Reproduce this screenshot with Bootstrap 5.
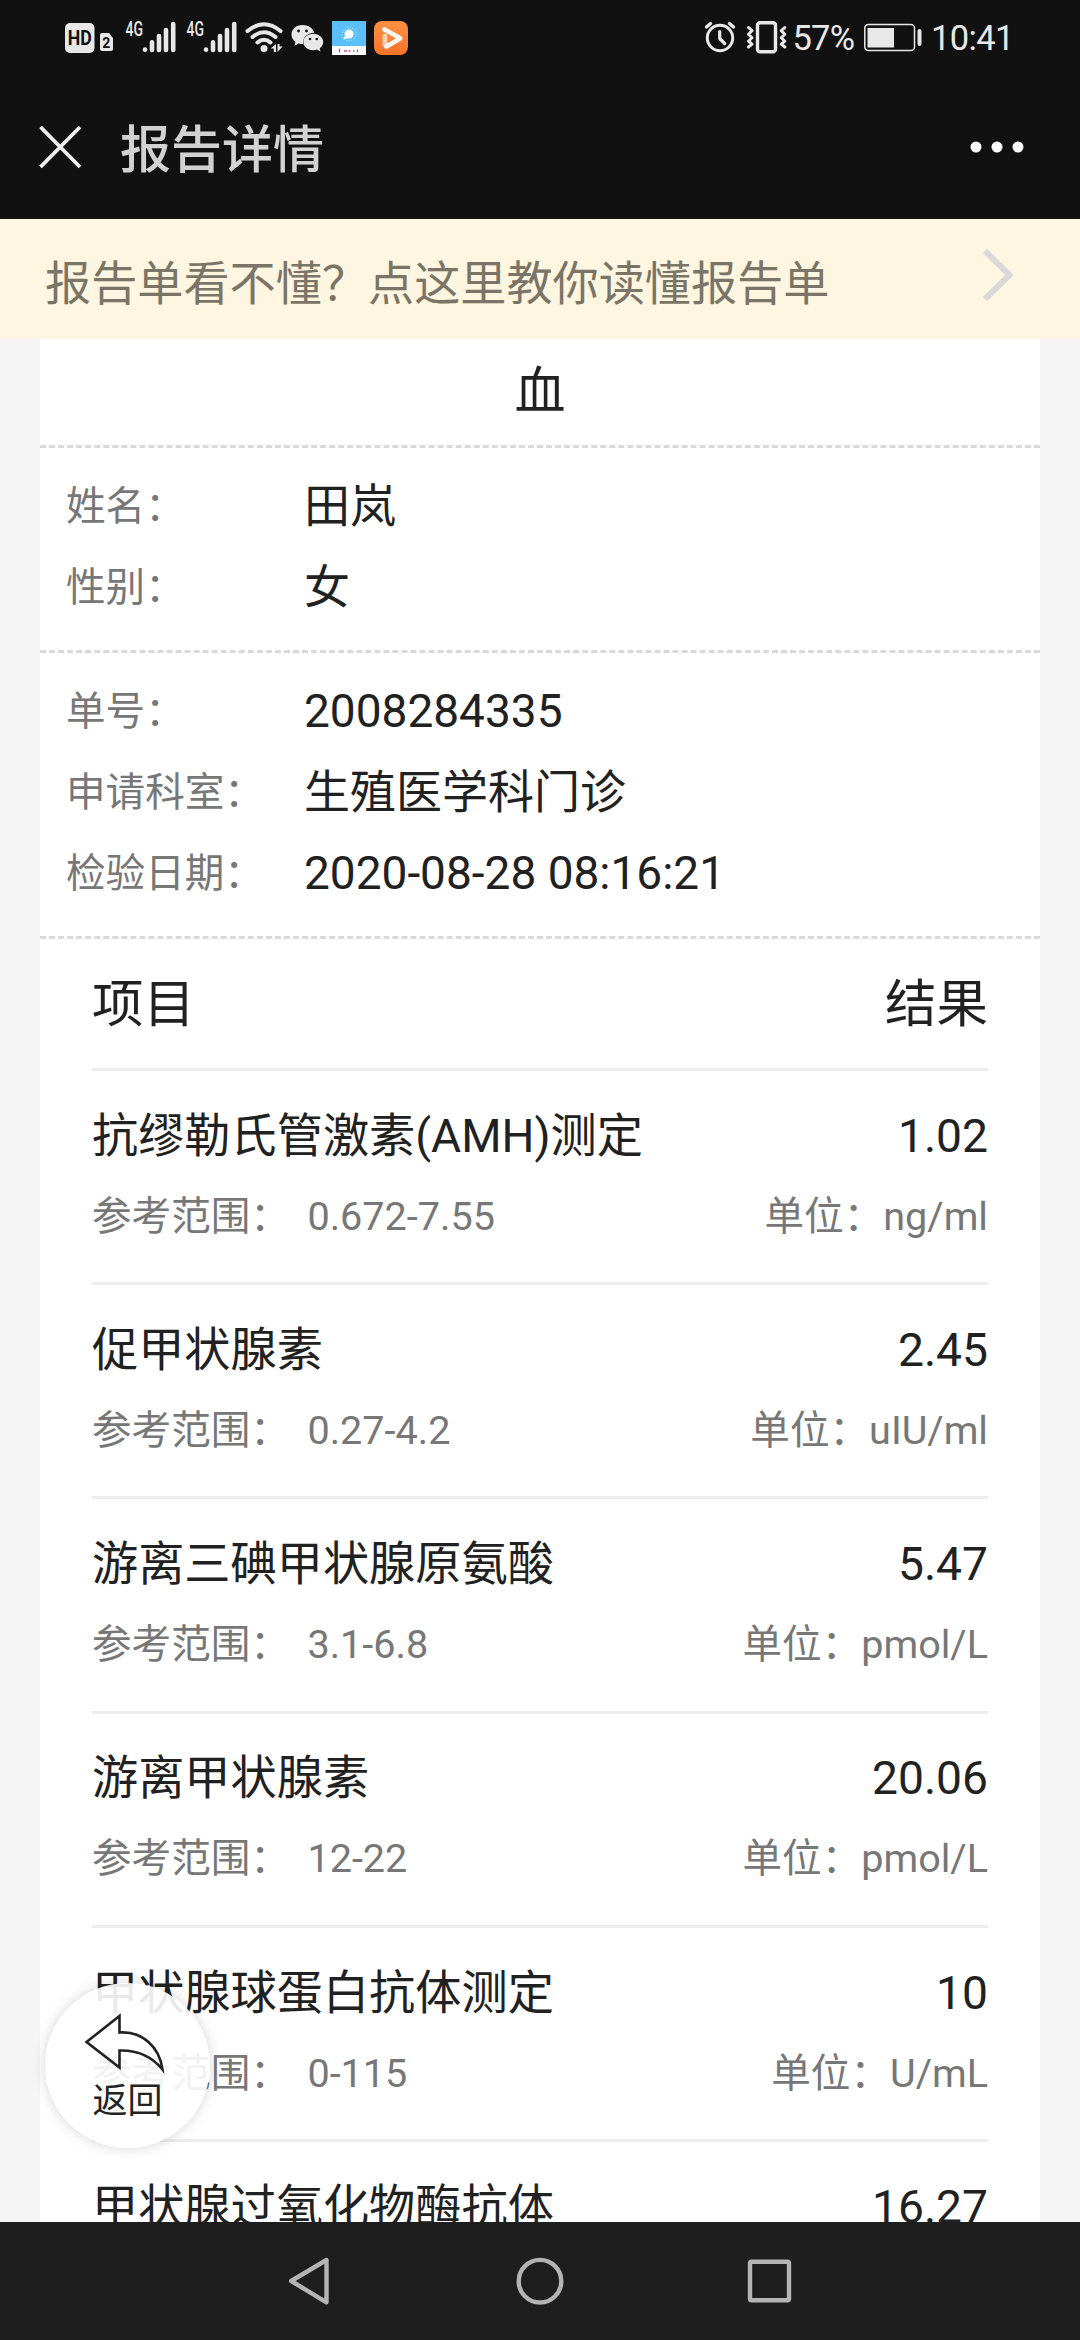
<!DOCTYPE html>
<html lang="zh-CN">
<head>
<meta charset="utf-8">
<meta name="viewport" content="width=device-width, initial-scale=1">
<title>报告详情</title>
<link href="https://cdn.jsdelivr.net/npm/bootstrap@5.3.0/dist/css/bootstrap.min.css" rel="stylesheet">
<style>
html,body{height:2340px;overflow:hidden}
body{font-family:Roboto,"Noto Sans CJK SC",sans-serif;color:#212121;background:#f5f5f5;line-height:1.2}
svg{display:block;flex:none;overflow:visible}
.statusbar{height:98px;background:#111;color:#e8e8e8;font-size:35px;padding:21px 70px 0 65px}
.status-set{height:34px}
.titlebar{height:121px;background:#111;padding:0 56px 24px 38px}
.page-title{font-size:51px;font-weight:500;color:#d2d2d2;margin-left:38px;line-height:60px;padding-top:8px}
.guide{height:119.5px;background:#fef6e1;color:#7a7566;font-size:46.15px;padding:0 65px 0 45px}
.guide-text{padding-top:11px}
.guide-arrow{margin-bottom:8px}
.sheet{width:1000px;height:1883.5px;background:#fff;overflow:hidden}
.dash{border-bottom:3px dashed #d9d9d9}
.sample{height:109.5px;font-size:51px}
.info{padding:18px 26px 0;height:205px}
.info.tall{height:286px}
.info-line{height:81px;font-size:46px}
.info-key{width:238px;font-size:39.6px;color:#777}
.results{padding:0 52px}
.result-head{height:132px;font-size:51.5px;border-bottom:3px solid #ededed;padding-top:3px}
.result-row{height:214.2px;border-bottom:3px solid #ededed;padding-top:25.5px;font-size:46.2px}
.result-main{height:80px}
.result-sub{height:80px;font-size:39.6px;color:#777}
.range{margin-left:17.5px}
.back{position:absolute;left:45px;top:1983px;width:165px;height:165px;border-radius:50%;background:rgba(255,255,255,.9);box-shadow:0 0 14px rgba(0,0,0,.17);font-size:35px;line-height:40px;color:#222;padding-top:30px}
.back-label{margin-top:7px}
.navkeys{height:118px;background:#1e1e1e}
</style>
</head>
<body>
<div class="d-flex flex-column h-100">
<header>
  <div class="statusbar d-flex justify-content-between align-items-start">
    <div class="status-set d-flex">
      <svg width="343" height="34" viewBox="65 21 343 34" fill="#e8e8e8">
        <rect x="65" y="23" width="29.5" height="30" rx="5"/>
        <text x="79.7" y="45" text-anchor="middle" font-family="Roboto" font-weight="700" font-size="19.5" textLength="24" lengthAdjust="spacingAndGlyphs" fill="#111">HD</text>
        <path d="M100 35q0-2 2-2h7l4 5v11q0 2-2 2h-9q-2 0-2-2z"/>
        <text x="106.3" y="47.5" text-anchor="middle" font-family="Roboto" font-weight="700" font-size="14" fill="#111">2</text>
        <g id="signal">
          <text x="125.5" y="35.5" font-family="Roboto" font-weight="500" font-size="19.5" textLength="17.5" lengthAdjust="spacingAndGlyphs">4G</text>
          <path d="M145 49.5v.3M152 42.2V50M159 36v14M166 30v20M173.200 24v26" stroke="#e8e8e8" stroke-width="4.6" stroke-linecap="round"/>
        </g>
        <use href="#signal" x="61"/>
        <g fill="none" stroke="#e8e8e8" stroke-width="4" stroke-linecap="round">
          <path d="M247.500 31Q264 17.500 280.500 31M252.500 37Q264 27.500 275.500 37M257.500 42.500Q264 37 270.500 42.500"/>
        </g>
        <circle cx="264" cy="48.500" r="3.500"/>
        <path d="M276 44v8h-2.200v-3.500h-3.300zM277.500 44v8l5-5.500h-3V44z"/>
        <path d="M302.500 25c-6.500 0-11 4.200-11 9.500 0 3.200 1.600 5.700 4 7.300l-1 4 4-2.200c1.500.5 3 .7 4.600.7-1-6.500 4.500-11.500 11-11.500-1-4.700-5.600-7.800-11.600-7.800z"/>
        <path d="M313.300 33.800c-5.700 0-10 3.700-10 8.200s4.200 8.200 9.700 8.200c1.500 0 2.800-.2 4-.7l3.500 2-.8-3.300c2-1.500 3.500-3.600 3.500-6.200 0-4.500-4.200-8.200-9.900-8.200z"/>
        <g fill="#111"><circle cx="298.500" cy="31" r="1.400"/><circle cx="306.500" cy="31" r="1.400"/><circle cx="310" cy="39" r="1.300"/><circle cx="316.700" cy="39" r="1.300"/></g>
        <path fill="#5bc0fa" d="M332 21h34v25h-34z"/><path fill="#fff" d="M332 46h34v9h-34z"/>
        <circle cx="349" cy="34" r="4.500" fill="#fff"/><path d="M345 36l-1.800 3.500L348 38z" fill="#fff"/>
        <circle cx="349" cy="34" r="6.800" fill="none" stroke="#fff" stroke-dasharray="1 1.500" opacity=".7"/>
        <path d="M339.500 48.500v4M344 51h3M348.500 51h2M353 51h1.500M357.500 49.500v2.500" stroke="#c0588a" stroke-width="1.400"/>
        <linearGradient id="org" x2="0" y2="1"><stop stop-color="#fb9143"/><stop offset="1" stop-color="#f9722a"/></linearGradient>
        <rect x="374" y="21" width="34" height="34" rx="8" fill="url(#org)"/>
        <path d="M385 45V36" stroke="#ffd0ae" stroke-width="4.800" stroke-linecap="round"/>
        <path d="M384.500 29.500L400 38M400 38.500L386.500 46.500" stroke="#fff6ee" stroke-width="4.800" stroke-linecap="round"/>
      </svg>
    </div>
    <div class="status-set d-flex">
      <svg width="305" height="34" viewBox="705 21 305 34" fill="none" stroke="#e8e8e8" stroke-width="3">
        <circle cx="720" cy="38" r="12.700"/><path d="M719.700 31.500v7l5 5" stroke-width="3.200" stroke-linecap="round"/>
        <path d="M706.500 27l4-3.500M733.500 27l-4-3.500" stroke-width="3.400" stroke-linecap="round"/>
        <rect x="757.500" y="22.700" width="18" height="29" rx="2.500" stroke-width="3.400"/>
        <path d="M748.500 27.500l3.500 3.200-3.500 3.500 3.500 3.500-3.500 3.500 3.500 3-3.500 2.800M784.800 27.500l-3.500 3.200 3.500 3.500-3.500 3.500 3.500 3.500-3.500 3 3.500 2.800" stroke-width="3" stroke-linecap="round" stroke-linejoin="round"/>
        <rect x="864.800" y="24.500" width="49.700" height="26" rx="3.500" stroke-width="1.500"/>
        <path d="M867.500 28h26.500v19.500h-26.500z" fill="#e8e8e8" stroke="none"/>
        <path d="M919.500 31v13" stroke-width="4" stroke-linecap="round"/>
        <g fill="#e8e8e8" stroke="none" font-family="Roboto" font-size="34.500">
          <text x="792.500" y="50" textLength="62.500">57%</text><text x="931" y="50" textLength="83.500">10:41</text>
        </g>
      </svg>
    </div>
  </div>
  <div class="titlebar d-flex align-items-center">
    <svg width="44" height="44" viewBox="0 0 44 44" fill="none" stroke="#f0f0f0" stroke-width="3.800"><path d="M2.500 2L42 42M42 2L2.500 42"/></svg>
    <h1 class="page-title mb-0">报告详情</h1>
    <svg class="ms-auto" width="54" height="12" viewBox="0 0 54 12" fill="#fff"><circle cx="6" cy="6" r="5.500"/><circle cx="27" cy="6" r="5.500"/><circle cx="48" cy="6" r="5.500"/></svg>
  </div>
</header>
<a href="#" class="guide d-flex align-items-center justify-content-between text-decoration-none">
  <span class="guide-text">报告单看不懂？点这里教你读懂报告单</span>
  <svg class="guide-arrow" width="34" height="56" viewBox="0 0 34 56" fill="none" stroke="#d9d9d9" stroke-width="6"><path d="M4 4L28.500 28 4 52"/></svg>
</a>
<main class="sheet mx-auto">
  <div class="sample dash d-flex align-items-center justify-content-center">血</div>
  <section class="info dash">
    <div class="info-line d-flex align-items-center"><span class="info-key">姓名：</span><span>田岚</span></div>
    <div class="info-line d-flex align-items-center"><span class="info-key">性别：</span><span>女</span></div>
  </section>
  <section class="info tall dash">
    <div class="info-line d-flex align-items-center"><span class="info-key">单号：</span><span>2008284335</span></div>
    <div class="info-line d-flex align-items-center"><span class="info-key">申请科室：</span><span>生殖医学科门诊</span></div>
    <div class="info-line d-flex align-items-center"><span class="info-key">检验日期：</span><span>2020-08-28 08:16:21</span></div>
  </section>
  <section class="results">
    <div class="result-head d-flex align-items-center justify-content-between"><span>项目</span><span>结果</span></div>
    <div class="result-row">
      <div class="result-main d-flex align-items-center justify-content-between"><span>抗缪勒氏管激素(AMH)测定</span><span>1.02</span></div>
      <div class="result-sub d-flex align-items-center justify-content-between"><span>参考范围：<span class="range">0.672-7.55</span></span><span>单位：ng/ml</span></div>
    </div>
    <div class="result-row">
      <div class="result-main d-flex align-items-center justify-content-between"><span>促甲状腺素</span><span>2.45</span></div>
      <div class="result-sub d-flex align-items-center justify-content-between"><span>参考范围：<span class="range">0.27-4.2</span></span><span>单位：uIU/ml</span></div>
    </div>
    <div class="result-row">
      <div class="result-main d-flex align-items-center justify-content-between"><span>游离三碘甲状腺原氨酸</span><span>5.47</span></div>
      <div class="result-sub d-flex align-items-center justify-content-between"><span>参考范围：<span class="range">3.1-6.8</span></span><span>单位：pmol/L</span></div>
    </div>
    <div class="result-row">
      <div class="result-main d-flex align-items-center justify-content-between"><span>游离甲状腺素</span><span>20.06</span></div>
      <div class="result-sub d-flex align-items-center justify-content-between"><span>参考范围：<span class="range">12-22</span></span><span>单位：pmol/L</span></div>
    </div>
    <div class="result-row">
      <div class="result-main d-flex align-items-center justify-content-between"><span>甲状腺球蛋白抗体测定</span><span>10</span></div>
      <div class="result-sub d-flex align-items-center justify-content-between"><span>参考范围：<span class="range">0-115</span></span><span>单位：U/mL</span></div>
    </div>
    <div class="result-row">
      <div class="result-main d-flex align-items-center justify-content-between"><span>甲状腺过氧化物酶抗体</span><span>16.27</span></div>
    </div>
  </section>
</main>
<nav class="navkeys">
  <svg width="1080" height="118" viewBox="0 2222 1080 118" fill="none" stroke="#b4b4b4" stroke-width="4.400" stroke-linejoin="round">
    <path d="M291.200 2281L326.500 2260V2302.300z"/><circle cx="540" cy="2281.200" r="21.300"/><rect x="750" y="2261.800" width="39" height="38.500" rx="1.500"/>
  </svg>
</nav>
</div>
<a href="#" class="back d-flex flex-column align-items-center text-decoration-none">
  <svg width="90" height="62" viewBox="82.500 2013 90 62" fill="none" stroke="#222" stroke-width="2.600"><path d="M86 2042L119 2016V2032.500C142 2031 159 2047 162 2069.500C151 2056 137 2050 119 2050.500V2067.500z"/></svg>
  <span class="back-label">返回</span>
</a>
<script src="https://cdn.jsdelivr.net/npm/bootstrap@5.3.0/dist/js/bootstrap.bundle.min.js"></script>
</body>
</html>
